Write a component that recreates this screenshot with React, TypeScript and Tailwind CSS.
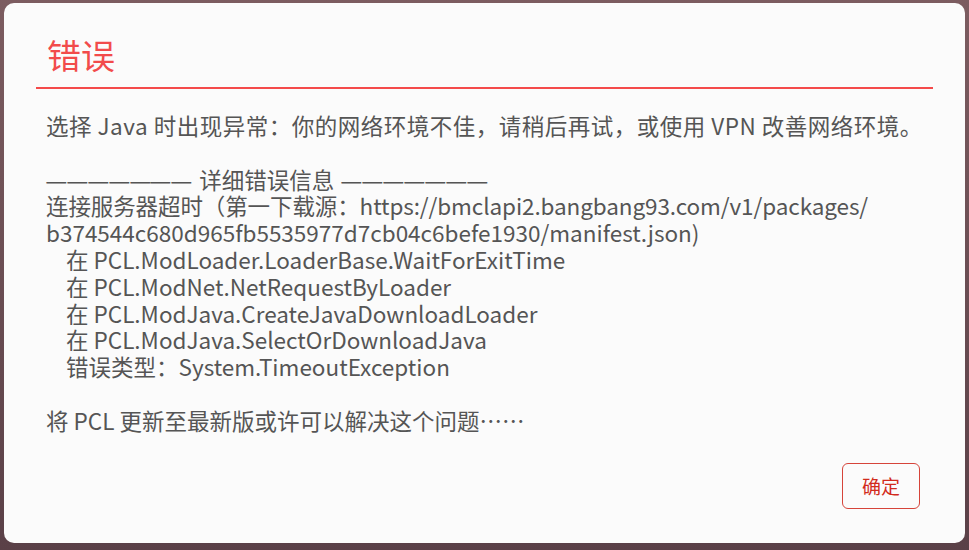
import React from "react";

const font = { fontFamily: '"Noto Sans CJK SC", "Noto Sans", sans-serif' };

function Dashes() {
  return (
    <span className="inline-flex">
      {Array.from({ length: 7 }).map((_, i) => (
        <span key={i} className="inline-block w-[20.9px] text-center scale-x-110">
          —
        </span>
      ))}
    </span>
  );
}

export default function App() {
  const lines = [
    "在 PCL.ModLoader.LoaderBase.WaitForExitTime",
    "在 PCL.ModNet.NetRequestByLoader",
    "在 PCL.ModJava.CreateJavaDownloadLoader",
    "在 PCL.ModJava.SelectOrDownloadJava",
    "错误类型：System.TimeoutException",
  ];
  return (
    <div
      className="w-[969px] h-[550px] bg-gradient-to-b from-[#7c5c60] to-[#5a4047] pt-[3px] pl-[4px] pr-[4px] pb-[7px] flex"
      style={font}
    >
      <div className="flex-1 bg-[#fbfbfb] rounded-[10px] px-[32px] pt-[32px] pb-[34px] flex flex-col">
        <div className="pl-[11px] text-[34px] leading-[40px] text-[#f24b4b] mb-[12px]">错误</div>
        <div className="h-[2px] bg-[#f44a4a]" />
        <div className="pl-[10px] pt-[23px] text-[22.5px] leading-[26.8px] text-[#555555]">
          <div className="tracking-[0.5px]">选择 Java 时出现异常：你的网络环境不佳，请稍后再试，或使用 VPN 改善网络环境。</div>
          <div className="h-[26.8px]" />
          <div className="flex items-baseline gap-[7px]">
            <Dashes />
            <span>详细错误信息</span>
            <Dashes />
          </div>
          <div className="tracking-[-0.1px]">连接服务器超时（第一下载源：https://bmclapi2.bangbang93.com/v1/packages/</div>
          <div>b374544c680d965fb5535977d7cb04c6befe1930/manifest.json)</div>
          {lines.map((l) => (
            <div key={l} className="pl-[20px]">{l}</div>
          ))}
          <div className="h-[26.8px]" />
          <div>将 PCL 更新至最新版或许可以解决这个问题……</div>
        </div>
        <div className="flex-1" />
        <div className="flex justify-end pr-[13px]">
          <button className="w-[78px] h-[46px] border border-[#d6443a] rounded-[6px] text-[19px] text-[#d22b1d] flex items-center justify-center">
            确定
          </button>
        </div>
      </div>
    </div>
  );
}
